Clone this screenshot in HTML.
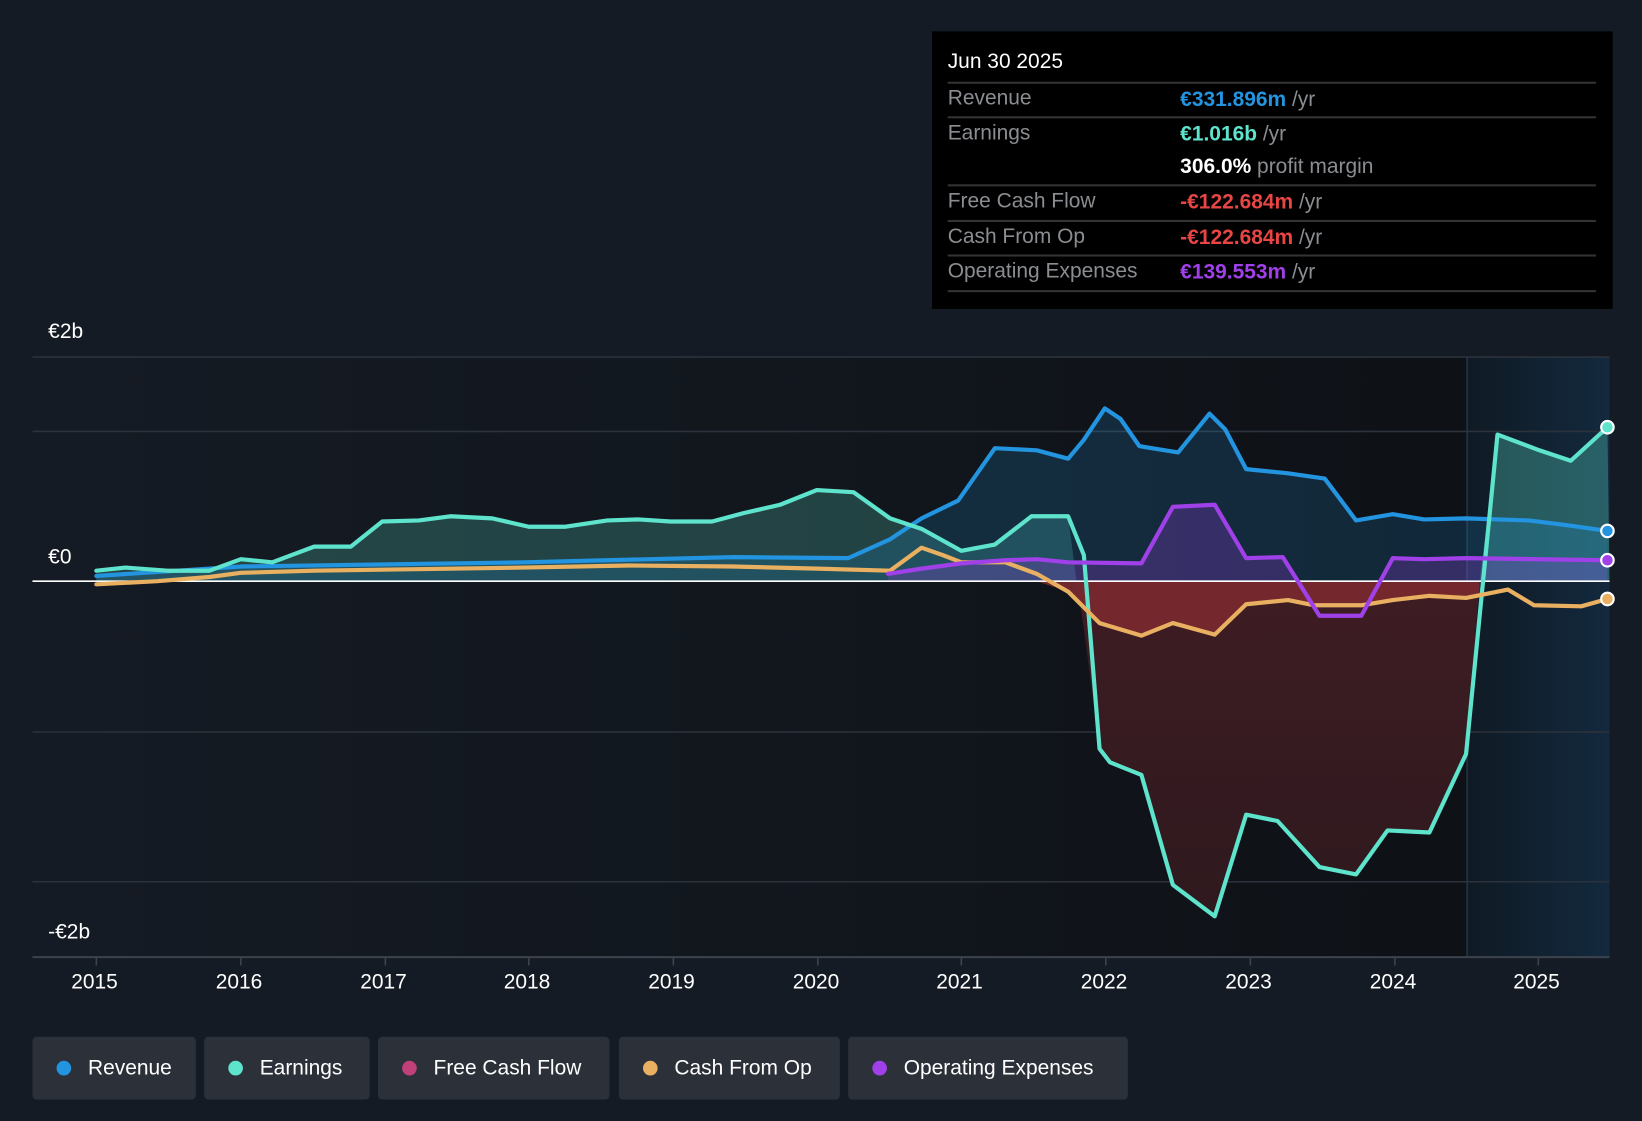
<!DOCTYPE html>
<html><head><meta charset="utf-8"><style>
html,body{margin:0;padding:0;background:#151b24;width:1642px;height:1120px;overflow:hidden}
#w{position:absolute;left:0;top:0;width:1568px;height:1070px;transform:scale(1.04719);transform-origin:0 0;font-family:"Liberation Sans",sans-serif}
.tt{position:absolute;left:890px;top:30px;width:650px;height:265px;background:#000}
.tt .d{position:absolute;left:15px;top:18px;color:#fff;font-size:20px}
.row{position:absolute;left:15px;width:619px;border-top:2px solid #333;font-size:20px;color:#8a8d91;padding-top:3px;height:28px}
.row span{position:absolute;left:222px;top:4px}
.row b{font-weight:bold}
.leg{position:absolute;top:990px;height:60px;background:#2b3039;border-radius:4px;color:#fff;font-size:20px;line-height:60px}
.leg i{display:inline-block;width:14px;height:14px;border-radius:50%;margin:0 16px 0 23px;vertical-align:-1px}
.lab{position:absolute;color:#fff;font-size:20px}
</style></head><body><div id="w">
<svg width="1568" height="1070" style="position:absolute;left:0;top:0">
<defs>
<linearGradient id="bg" x1="0" x2="1" y1="0" y2="0"><stop offset="0" stop-color="#151b24"/><stop offset="0.5" stop-color="#12171e"/><stop offset="1" stop-color="#0e1116"/></linearGradient>
<linearGradient id="fc" x1="0" x2="1" y1="0" y2="0"><stop offset="0" stop-color="#0f1a24"/><stop offset="1" stop-color="#13293e"/></linearGradient>
<linearGradient id="red" x1="0" x2="0" y1="0" y2="1"><stop offset="0" stop-color="#3e1d23"/><stop offset="1" stop-color="#2e191e"/></linearGradient>
</defs>
<rect x="31" y="341" width="1370" height="573" fill="url(#bg)"/>
<rect x="1401" y="341" width="136" height="573" fill="url(#fc)"/>
<g stroke="#2c323b" stroke-width="1.5"><line x1="31" x2="1537" y1="341" y2="341"/><line x1="31" x2="1537" y1="412" y2="412"/><line x1="31" x2="1537" y1="699" y2="699"/><line x1="31" x2="1537" y1="842" y2="842"/></g>
<line x1="1401" x2="1401" y1="341" y2="914" stroke="#243446" stroke-width="1.5"/>
<polygon fill="rgba(94,227,204,0.22)" points="92,555 92,545 120,542 160,545 200,545 230,534 260,537 300,522 335,522 365,498 400,497 430,493 470,495 505,503 540,503 580,497 610,496 640,498 680,498 710,490 745,482 780,468 815,470 850,495 880,505 918,526 950,520 985,493 1020,493 1028,555"/>
<polygon fill="url(#red)" points="1028,555 1035,600 1050,715 1060,728 1090,740 1120,845 1160,875 1190,778 1220,784 1260,828 1295,835 1325,793 1365,795 1400,720 1413,555"/>
<polygon fill="#7a2a30" opacity="0.9" points="990,555 1020,565 1050,595 1090,607 1120,595 1160,606 1190,577 1230,573 1255,578 1300,578 1330,573 1365,569 1400,571 1413,568 1413,555"/>
<polygon fill="rgba(94,227,204,0.3)" points="1413,555 1430,415 1470,430 1500,440 1535,408 1537,555"/>
<polygon fill="rgba(35,148,223,0.18)" points="92,555 92,550 230,541 500,537 700,532 810,533 850,515 880,495 915,478 950,428 990,430 1020,438 1035,420 1055,390 1070,400 1088,426 1125,432 1155,395 1170,410 1190,448 1230,452 1265,457 1295,497 1330,491 1360,496 1400,495 1460,497 1500,502 1535,507 1535,555"/>
<polygon fill="rgba(160,64,232,0.25)" points="848,555 848,548 880,543 918,538 960,535 990,534 1020,537 1090,538 1120,484 1160,482 1190,533 1225,532 1242,555 1318,555 1330,533 1360,534 1400,533 1535,535 1535,555"/>
<line x1="31" x2="1537" y1="555" y2="555" stroke="#fff" stroke-width="1.5"/>
<line x1="31" x2="1537" y1="914" y2="914" stroke="#3d434c" stroke-width="2"/>
<g stroke="#3d434c" stroke-width="1.5"><line x1="92" x2="92" y1="914" y2="922"/><line x1="230" x2="230" y1="914" y2="922"/><line x1="368" x2="368" y1="914" y2="922"/><line x1="505" x2="505" y1="914" y2="922"/><line x1="643" x2="643" y1="914" y2="922"/><line x1="781" x2="781" y1="914" y2="922"/><line x1="918" x2="918" y1="914" y2="922"/><line x1="1056" x2="1056" y1="914" y2="922"/><line x1="1194" x2="1194" y1="914" y2="922"/><line x1="1332" x2="1332" y1="914" y2="922"/><line x1="1469" x2="1469" y1="914" y2="922"/></g>
<g fill="none" stroke-width="4" stroke-linejoin="round" stroke-linecap="round">
<polyline stroke="#2394df" points="92,550 230,541 500,537 700,532 810,533 850,515 880,495 915,478 950,428 990,430 1020,438 1035,420 1055,390 1070,400 1088,426 1125,432 1155,395 1170,410 1190,448 1230,452 1265,457 1295,497 1330,491 1360,496 1400,495 1460,497 1500,502 1535,507"/>
<polyline stroke="#5ee3cc" points="92,545 120,542 160,545 200,545 230,534 260,537 300,522 335,522 365,498 400,497 430,493 470,495 505,503 540,503 580,497 610,496 640,498 680,498 710,490 745,482 780,468 815,470 850,495 880,505 918,526 950,520 985,493 1020,493 1035,530 1050,715 1060,728 1090,740 1120,845 1160,875 1190,778 1220,784 1260,828 1295,835 1325,793 1365,795 1400,720 1430,415 1470,430 1500,440 1535,408"/>
<polyline stroke="#e8b060" points="92,558 150,555 200,551 230,547 300,545 500,542 600,540 700,541 780,543 850,545 880,523 900,530 918,537 960,537 990,548 1020,565 1050,595 1090,607 1120,595 1160,606 1190,577 1230,573 1255,578 1300,578 1330,573 1365,569 1400,571 1440,563 1465,578 1510,579 1535,572"/>
<polyline stroke="#a040e8" points="848,548 880,543 918,538 960,535 990,534 1020,537 1090,538 1120,484 1160,482 1190,533 1225,532 1260,588 1300,588 1330,533 1360,534 1400,533 1535,535"/>
</g>
<g stroke="#fff" stroke-width="2"><circle cx="1535" cy="408" r="6" fill="#5ee3cc"/><circle cx="1535" cy="507" r="6" fill="#2394df"/><circle cx="1535" cy="535" r="6" fill="#a040e8"/><circle cx="1535" cy="572" r="6" fill="#e8b060"/></g>
</svg>
<div class="lab" style="left:46px;top:306px">€2b</div>
<div class="lab" style="left:46px;top:521px">€0</div>
<div class="lab" style="left:46px;top:879px">-€2b</div>
<div class="lab" style="left:68px;top:927px">2015</div><div class="lab" style="left:206px;top:927px">2016</div><div class="lab" style="left:344px;top:927px">2017</div><div class="lab" style="left:481px;top:927px">2018</div><div class="lab" style="left:619px;top:927px">2019</div><div class="lab" style="left:757px;top:927px">2020</div><div class="lab" style="left:894px;top:927px">2021</div><div class="lab" style="left:1032px;top:927px">2022</div><div class="lab" style="left:1170px;top:927px">2023</div><div class="lab" style="left:1308px;top:927px">2024</div><div class="lab" style="left:1445px;top:927px">2025</div>
<div class="tt"><div class="d">Jun 30 2025</div>
<div class="row" style="top:48px">Revenue<span><b style="color:#2394df">€331.896m</b> /yr</span></div>
<div class="row" style="top:81px">Earnings<span><b style="color:#5ee3cc">€1.016b</b> /yr</span></div>
<div class="row" style="top:114px;border-top:none"><span><b style="color:#fff">306.0%</b> profit margin</span></div>
<div class="row" style="top:146px">Free Cash Flow<span><b style="color:#e84545">-€122.684m</b> /yr</span></div>
<div class="row" style="top:180px">Cash From Op<span><b style="color:#e84545">-€122.684m</b> /yr</span></div>
<div class="row" style="top:213px">Operating Expenses<span><b style="color:#a040e8">€139.553m</b> /yr</span></div>
<div class="row" style="top:247px"></div>
</div>
<div class="leg" style="left:31px;width:156px"><i style="background:#2394df"></i>Revenue</div>
<div class="leg" style="left:195px;width:158px"><i style="background:#5ee3cc"></i>Earnings</div>
<div class="leg" style="left:361px;width:221px"><i style="background:#c0407a"></i>Free Cash Flow</div>
<div class="leg" style="left:591px;width:211px"><i style="background:#e8b060"></i>Cash From Op</div>
<div class="leg" style="left:810px;width:267px"><i style="background:#a040e8"></i>Operating Expenses</div>
</div></body></html>
